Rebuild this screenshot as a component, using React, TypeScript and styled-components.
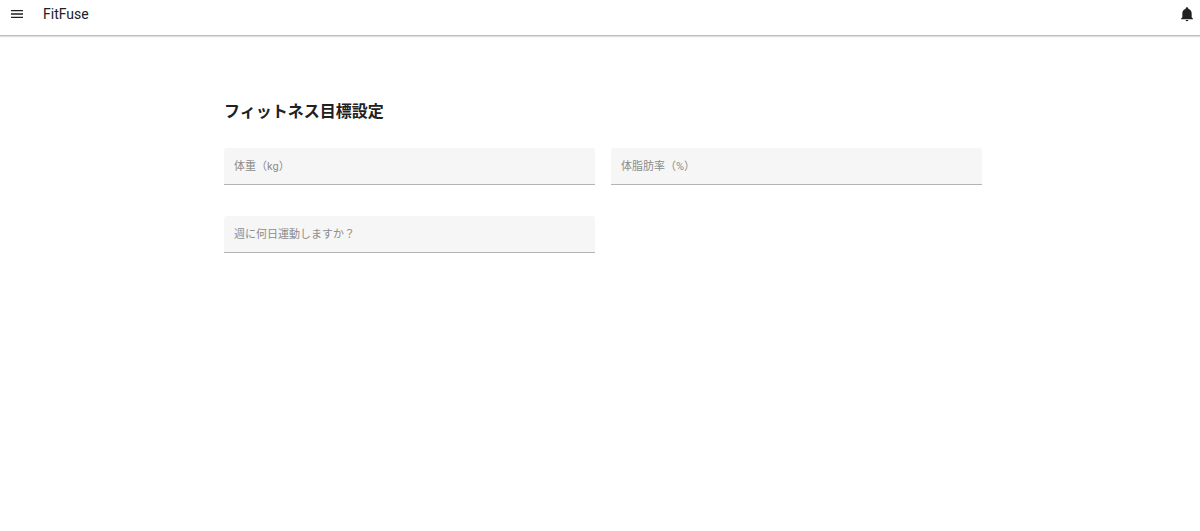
import React from "react";
import styled, { createGlobalStyle } from "styled-components";

const GlobalStyle = createGlobalStyle`
  *, *::before, *::after { box-sizing: border-box; }
  body {
    margin: 0;
    background: #fff;
    color: #212121;
    font-family: Roboto, "Noto Sans CJK JP", sans-serif;
  }
`;

const AppBar = styled.header`
  display: flex;
  align-items: flex-start;
  height: 36px;
  padding: 6px 5px 0 9px;
  border-bottom: 1px solid #bdbdbd;
  box-shadow: 0 1px 1px rgba(0, 0, 0, 0.12);
`;

const IconButton = styled.button`
  display: flex;
  width: 16px;
  height: 16px;
  padding: 0;
  border: 0;
  background: none;
  color: #212121;
  cursor: pointer;
`;

const Icon = styled.svg`
  width: 16px;
  height: 16px;
  fill: currentColor;
`;

const Brand = styled.div`
  flex: 1;
  padding-left: 18px;
  font-size: 14px;
  line-height: 16px;
`;

const Main = styled.main`
  padding: 64px 16px 32px 22px;
`;

const GoalForm = styled.form`
  max-width: 758px;
  margin: 0 auto;
`;

const Title = styled.h1`
  margin: 0 0 24px;
  font-size: 16px;
  font-weight: 700;
  line-height: 24px;
`;

const Fields = styled.div`
  display: grid;
  grid-template-columns: 1fr 1fr;
  gap: 31px 16px;
`;

const Input = styled.input`
  display: block;
  width: 100%;
  height: 37px;
  padding: 0 10px;
  border: 0;
  border-bottom: 1px solid #b4b4b4;
  border-radius: 3px 3px 0 0;
  background: #f6f6f6;
  color: #212121;
  font-family: inherit;
  font-size: 11px;

  &::placeholder {
    color: #8c8c8c;
    opacity: 1;
  }
`;

const fields = [
  { name: "weight", label: "体重（kg）" },
  { name: "bodyFat", label: "体脂肪率（%）" },
  { name: "daysPerWeek", label: "週に何日運動しますか？" },
];

export default function App() {
  return (
    <>
      <GlobalStyle />
      <AppBar>
        <IconButton type="button" aria-label="メニュー">
          <Icon viewBox="0 0 24 24">
            <path d="M3,6H21V8H3V6M3,11H21V13H3V11M3,16H21V18H3V16Z" />
          </Icon>
        </IconButton>
        <Brand>FitFuse</Brand>
        <IconButton type="button" aria-label="通知">
          <Icon viewBox="0 0 24 24">
            <path d="M21,19V20H3V19L5,17V11C5,7.9 7.03,5.17 10,4.29C10,4.19 10,4.1 10,4A2,2 0 0,1 12,2A2,2 0 0,1 14,4C14,4.1 14,4.19 14,4.29C16.97,5.17 19,7.9 19,11V17L21,19M14,21A2,2 0 0,1 12,23A2,2 0 0,1 10,21" />
          </Icon>
        </IconButton>
      </AppBar>
      <Main>
        <GoalForm lang="ja">
          <Title>フィットネス目標設定</Title>
          <Fields>
            {fields.map(({ name, label }) => (
              <Input key={name} name={name} aria-label={label} placeholder={label} />
            ))}
          </Fields>
        </GoalForm>
      </Main>
    </>
  );
}
